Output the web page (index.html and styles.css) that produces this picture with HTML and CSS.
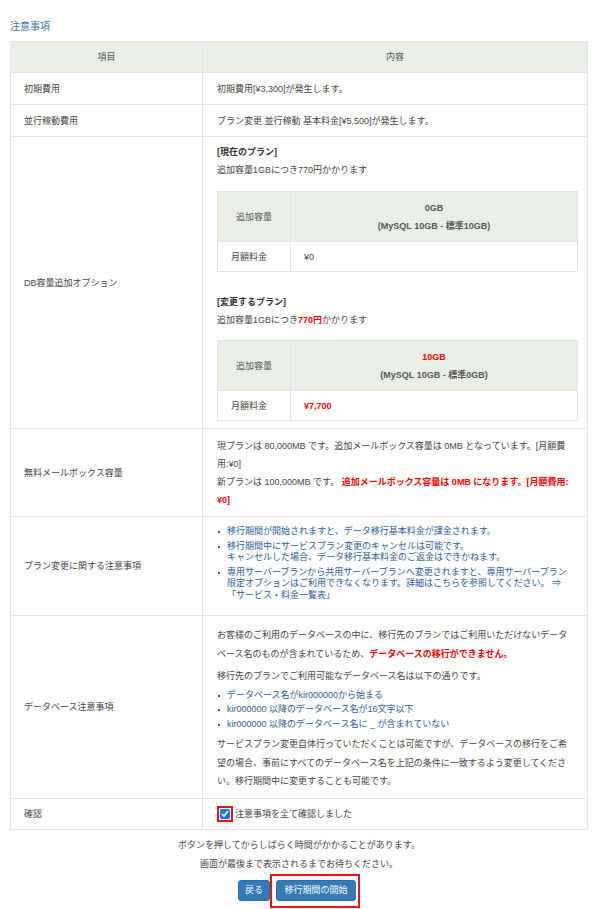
FILE: index.html
```html
<!DOCTYPE html>
<html lang="ja">
<head>
<meta charset="utf-8">
<title>注意事項</title>
<link rel="stylesheet" href="styles.css">
</head>
<body>
<div class="page">
  <h2 class="title">注意事項</h2>
  <table class="notes">
    <colgroup><col class="c1"><col class="c2"></colgroup>
    <thead>
      <tr><th>項目</th><th>内容</th></tr>
    </thead>
    <tbody>
      <tr class="r1"><td class="label">初期費用</td><td class="body">初期費用[¥3,300]が発生します。</td></tr>
      <tr class="r1"><td class="label">並行稼動費用</td><td class="body">プラン変更 並行稼動 基本料金[¥5,500]が発生します。</td></tr>
      <tr>
        <td class="label">DB容量追加オプション</td>
        <td class="body db">
          <p class="ln sub">[現在のプラン]</p>
          <p class="ln">追加容量1GBにつき770円かかります</p>
          <table class="inner first">
            <tr><th class="k">追加容量</th><th class="v">0GB<br>(MySQL 10GB - 標準10GB)</th></tr>
            <tr><td class="k">月額料金</td><td class="v">¥0</td></tr>
          </table>
          <p class="ln sub">[変更するプラン]</p>
          <p class="ln">追加容量1GBにつき<span class="red">770円</span>かかります</p>
          <table class="inner last">
            <tr><th class="k">追加容量</th><th class="v"><span class="red">10GB</span><br>(MySQL 10GB - 標準0GB)</th></tr>
            <tr><td class="k">月額料金</td><td class="v"><span class="red">¥7,700</span></td></tr>
          </table>
        </td>
      </tr>
      <tr>
        <td class="label">無料メールボックス容量</td>
        <td class="body mail">
          <p class="ln">現プランは 80,000MB です。追加メールボックス容量は 0MB となっています。[月額費<br>用:¥0]</p>
          <p class="ln">新プランは 100,000MB です。 <span class="red">追加メールボックス容量は 0MB になります。[月額費用:<br>¥0]</span></p>
        </td>
      </tr>
      <tr>
        <td class="label">プラン変更に関する注意事項</td>
        <td class="body plan">
          <ul class="blist tight">
            <li>移行期間が開始されますと、データ移行基本料金が課金されます。</li>
            <li>移行期間中にサービスプラン変更のキャンセルは可能です。<br>キャンセルした場合、データ移行基本料金のご返金はできかねます。</li>
            <li>専用サーバープランから共用サーバープランへ変更されますと、専用サーバープラン<br>限定オプションはご利用できなくなります。詳細はこちらを参照してください。 ⇒<br>「サービス・料金一覧表」</li>
          </ul>
        </td>
      </tr>
      <tr>
        <td class="label">データベース注意事項</td>
        <td class="body dbn">
          <p class="para">お客様のご利用のデータベースの中に、移行先のプランではご利用いただけないデータ<br>ベース名のものが含まれているため、<span class="red">データベースの移行ができません。</span></p>
          <p class="para p2">移行先のプランでご利用可能なデータベース名は以下の通りです。</p>
          <ul class="blist loose">
            <li>データベース名がkir000000から始まる</li>
            <li>kir000000 以降のデータベース名が16文字以下</li>
            <li>kir000000 以降のデータベース名に _ が含まれていない</li>
          </ul>
          <p class="para p3">サービスプラン変更自体行っていただくことは可能ですが、データベースの移行をご希<br>望の場合、事前にすべてのデータベース名を上記の条件に一致するよう変更してくださ<br>い。移行期間中に変更することも可能です。</p>
        </td>
      </tr>
      <tr>
        <td class="label">確認</td>
        <td class="body confirm">
          <label class="chk"><span class="chkbox"><input type="checkbox" checked></span><span>注意事項を全て確認しました</span></label>
        </td>
      </tr>
    </tbody>
  </table>
  <div class="foot">
    <p>ボタンを押してからしばらく時間がかかることがあります。</p>
    <p>画面が最後まで表示されるまでお待ちください。</p>
    <div class="btns">
      <button class="btn" type="button">戻る</button>
      <span class="hl"><button class="btn btn-main" type="button">移行期間の開始</button></span>
    </div>
  </div>
</div>
</body>
</html>
```

FILE: styles.css
```css
html, body {
  margin: 0;
  padding: 0;
  background: #fff;
}
body {
  font-family: "Liberation Sans", "Noto Sans CJK JP", sans-serif;
  font-size: 9px;
  color: #444;
}
.page {
  padding: 20px 12px 0 10px;
}
.title {
  margin: 0 0 7px;
  font-size: 10px;
  line-height: 14px;
  font-weight: normal;
  color: #3c6fa5;
}
.notes {
  width: 578px;
  border-collapse: collapse;
  table-layout: fixed;
}
.c1 { width: 192px; }
.notes > thead > tr > th,
.notes > tbody > tr > td {
  border: 1px solid #e3e3e3;
}
.notes > thead > tr > th {
  background: #e9efe6;
  font-weight: normal;
  color: #555;
  height: 30px;
  padding: 0;
  line-height: 12px;
  text-align: center;
}
.label {
  padding: 0 13px;
  line-height: 12px;
  vertical-align: middle;
}
.body {
  padding: 10px 9px 9px 14px;
  line-height: 12px;
  vertical-align: middle;
}
.ln, .para {
  margin: 0;
}
.ln { line-height: 18px; }
.sub { font-weight: bold; color: #333; }
.red { color: #f00; font-weight: bold; }

.db { padding: 6px 9px 7px 14px; }
.inner {
  width: 100%;
  border-collapse: collapse;
  table-layout: fixed;
  margin: 11px 0 21px;
}
.inner.first { margin-top: 12px; }
.inner.last { margin-bottom: 0; }
.inner th, .inner td {
  border: 1px solid #e3e3e3;
}
.inner th {
  background: #e9efe6;
  color: #555;
  line-height: 18px;
  padding: 6.5px 0;
  text-align: center;
  font-weight: bold;
}
.inner th.k { font-weight: normal; width: 72px; }
.inner td {
  padding: 9px 13px 8px;
  line-height: 12px;
}

.mail { padding: 8px 9px 7px 14px; }

.blist {
  margin: 0;
  padding: 0;
  list-style: none;
  color: #2f5b98;
}
.blist li {
  position: relative;
  padding-left: 10px;
}
.blist li::before {
  content: "";
  position: absolute;
  left: 1px;
  width: 2px;
  height: 2px;
  background: currentColor;
}
.tight li {
  line-height: 11.5px;
  margin-bottom: 3px;
}
.tight li::before { top: 5px; }
.loose { margin-top: 2px; }
.loose li { line-height: 14.5px; }
.loose li::before { top: 7px; }

.plan { padding: 9px 9px 11px 14px; vertical-align: top; }

.dbn { padding: 10px 9px 7px 14px; }
.para { line-height: 18.5px; }
.p2 { margin-top: 4px; }
.p3 { margin-top: 4px; }

.confirm { padding: 7px 9px 7px 14px; }
.chk {
  display: flex;
  align-items: center;
  gap: 2px;
}
.chkbox {
  display: inline-flex;
  border: 2px solid #e8141c;
  padding: 1px;
}
.chkbox input {
  margin: 0;
  width: 10px;
  height: 10px;
  accent-color: #1a73e8;
}

.foot {
  text-align: center;
  margin-top: 6px;
  width: 578px;
}
.foot p {
  margin: 0;
  line-height: 19px;
}
.btns {
  display: flex;
  justify-content: center;
  align-items: center;
}
.btn {
  box-sizing: border-box;
  font-family: "Liberation Sans", "Noto Sans CJK JP", sans-serif;
  font-size: 9px;
  color: #fff;
  background: #337ab7;
  border: 1px solid #2e6da4;
  border-radius: 3px;
  height: 21px;
  padding: 0 6px;
  line-height: 19px;
  cursor: pointer;
}
.btn-main { padding: 0 7.5px; }
.hl {
  display: flex;
  align-items: center;
  border: 2px solid #e8141c;
  padding: 4px 2px 5px 4px;
}
```
